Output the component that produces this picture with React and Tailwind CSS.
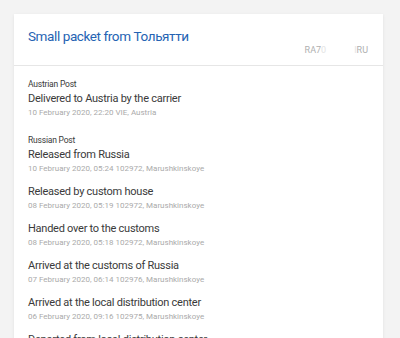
const groups = [
  {
    carrier: "Austrian Post",
    events: [
      { title: "Delivered to Austria by the carrier", date: "10 February 2020, 22:20 VIE, Austria" },
    ],
  },
  {
    carrier: "Russian Post",
    events: [
      { title: "Released from Russia", date: "10 February 2020, 05:24 102972, Marushkinskoye" },
      { title: "Released by custom house", date: "08 February 2020, 05:19 102972, Marushkinskoye" },
      { title: "Handed over to the customs", date: "08 February 2020, 05:18 102972, Marushkinskoye" },
      { title: "Arrived at the customs of Russia", date: "07 February 2020, 06:14 102976, Marushkinskoye" },
      { title: "Arrived at the local distribution center", date: "06 February 2020, 09:16 102975, Marushkinskoye" },
      { title: "Departed from local distribution center", date: "06 February 2020, 08:40 102975, Marushkinskoye" },
    ],
  },
];

export default function App() {
  return (
    <div
      className="h-[338px] overflow-hidden bg-[#f3f3f3] pt-[14px] pl-[14px]"
      style={{ fontFamily: "Roboto, 'Noto Sans', sans-serif" }}
    >
      <div className="w-[369px] bg-white shadow-[0_1px_3px_rgba(0,0,0,0.08)]">
        {/* Header */}
        <div className="px-[14px] pt-3 pb-[10px] border-b border-[#e6e6e6]">
          <h1 className="text-[13.5px] leading-5 tracking-[-0.4px] text-[#2563b3]">Small packet from Тольятти</h1>
          <div className="flex justify-end gap-[28px] text-[9px] leading-[10px] text-[#b0b0b0] mt-[-1px] pr-px">
            <span>
              RA7<span className="text-[#e4e4e4]">0</span>
            </span>
            <span>
              <span className="text-[#e4e4e4]">I</span>RU
            </span>
          </div>
        </div>

        {/* Events */}
        <div className="px-[14px] pt-3">
          {groups.map((g, gIdx) => (
            <div key={gIdx} className="mb-[15px]">
              <div className="text-[8.5px] leading-3 tracking-[-0.2px] text-[#3a3a3a] mb-px">{g.carrier}</div>
              {g.events.map((e, eIdx) => (
                <div key={eIdx} className="mb-[9px]">
                  <div className="text-[11px] leading-4 tracking-[-0.25px] text-[#3a3a3a]">{e.title}</div>
                  <div className="text-[8px] leading-3 text-[#aaaaaa]">{e.date}</div>
                </div>
              ))}
            </div>
          ))}
        </div>
      </div>
    </div>
  );
}
